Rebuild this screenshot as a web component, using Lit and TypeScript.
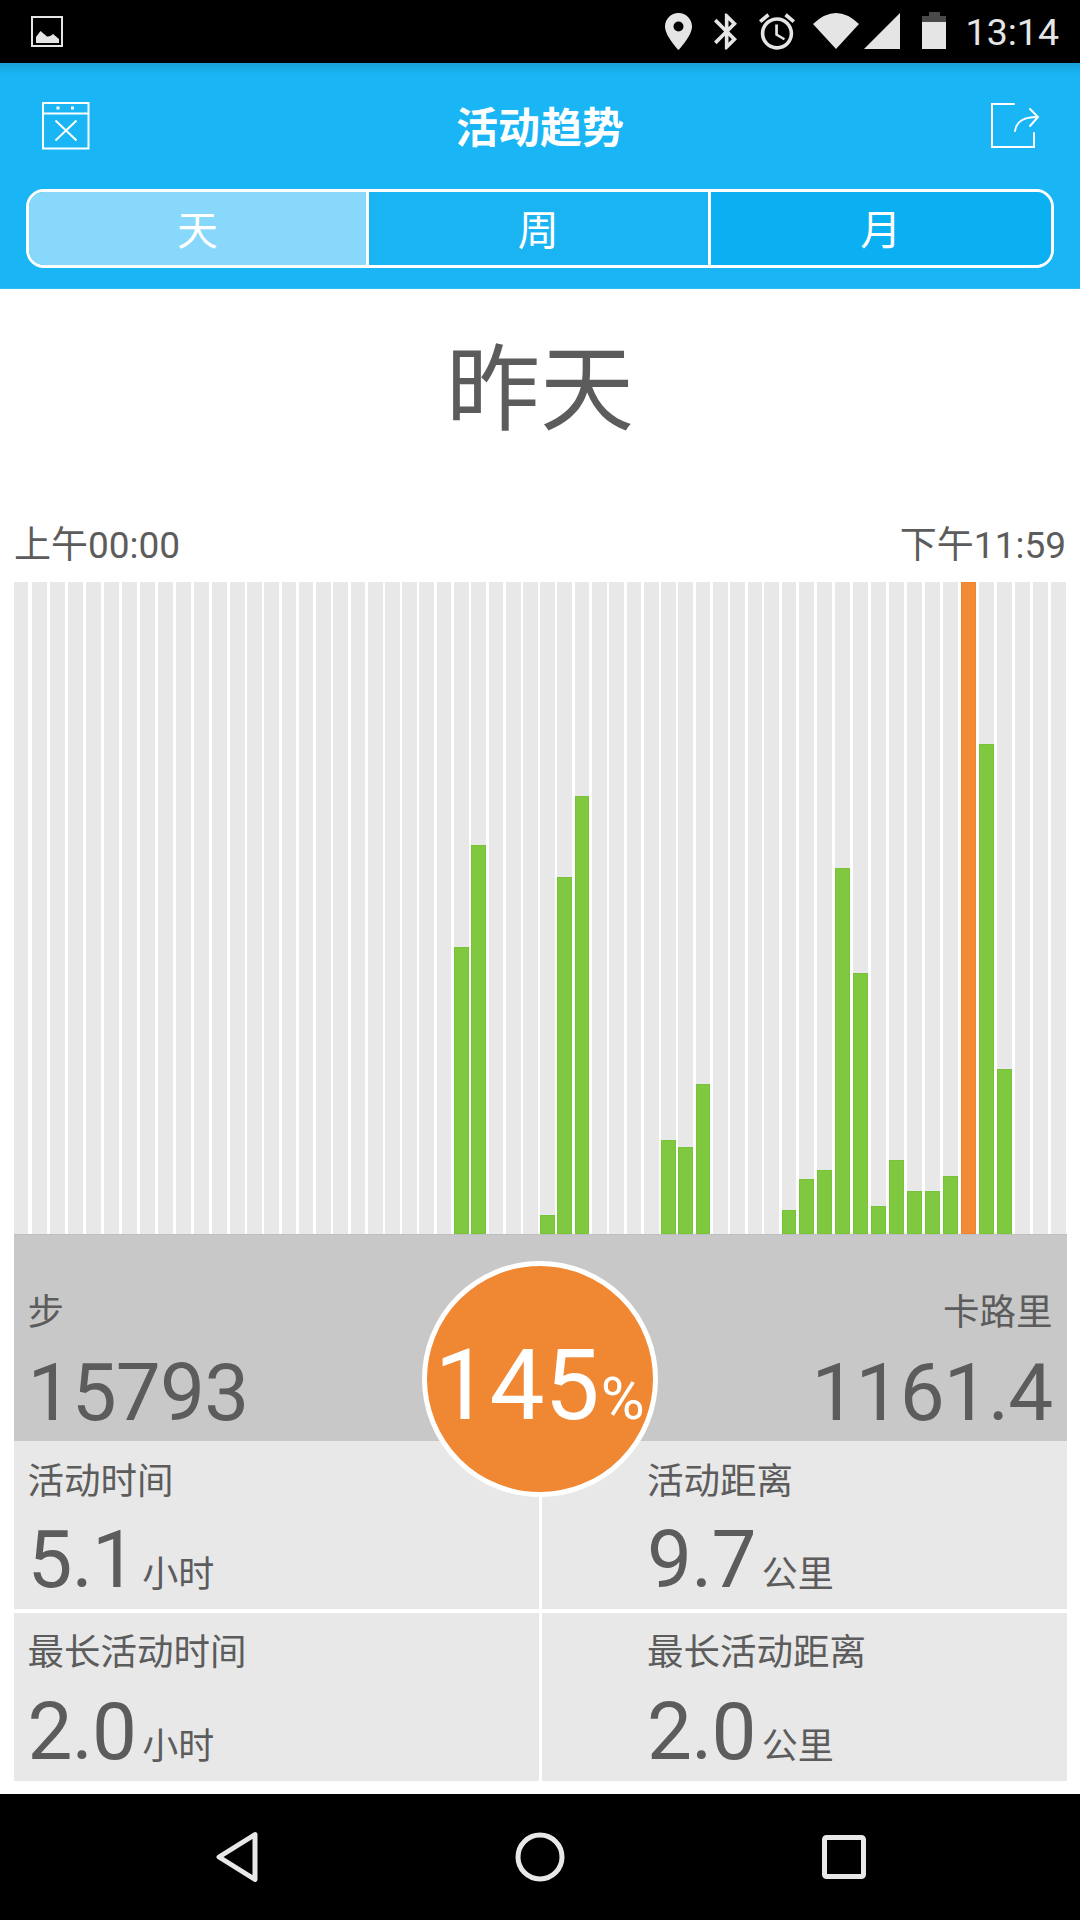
import { LitElement, css, html } from "lit";
import { customElement } from "lit/decorators.js";

// left edge of each of the 60 columns, read off the reference (it was scaled, so pitch is uneven)
const COL_X = [
  41, 96, 150, 204, 258, 312, 366, 420, 474, 528, 582, 636, 690, 741, 792, 845, 896, 948, 1000, 1052,
  1104, 1156, 1206, 1258, 1310, 1362, 1414, 1466, 1518, 1570, 1620, 1672, 1724, 1776, 1828, 1880, 1932,
  1983, 2035, 2087, 2139, 2191, 2243, 2293, 2345, 2397, 2451, 2505, 2559, 2613, 2667, 2721, 2775, 2829,
  2883, 2937, 2991, 3045, 3099, 3153,
].map((v) => v / 3);

const CHART_BOTTOM = 1234;
// column index -> top edge of its bar
const BAR_TOPS: Record<number, number> = {
  25: 947, 26: 845, 30: 1215, 31: 877, 32: 796, 37: 1140, 38: 1147, 39: 1084, 44: 1210, 45: 1179,
  46: 1170, 47: 868, 48: 973, 49: 1206, 50: 1160, 51: 1191, 52: 1191, 53: 1176, 54: 582, 55: 744, 56: 1069,
};
const PEAK = 54;

const CELLS = [
  { label: "活动时间", value: "5.1", unit: "小时" },
  { label: "活动距离", value: "9.7", unit: "公里" },
  { label: "最长活动时间", value: "2.0", unit: "小时" },
  { label: "最长活动距离", value: "2.0", unit: "公里" },
];

@customElement("app-root")
export class AppRoot extends LitElement {
  static styles = css`
    :host {
      display: block;
      position: relative;
      width: 1080px;
      height: 1920px;
      overflow: hidden;
      background: #fff;
      color: #5c5c5c;
      font-family: Roboto, "Noto Sans CJK SC", sans-serif;
    }
    svg {
      display: block;
      flex: none;
    }
    .status {
      height: 63px;
      background: #000;
      display: flex;
      align-items: flex-start;
      padding: 12px 21px 0 31px;
      box-sizing: border-box;
      color: #e5e5e5;
      fill: #e5e5e5;
    }
    .thumb {
      margin-top: 4px;
      margin-right: auto;
    }
    .pin,
    .bt,
    .alarm {
      margin-top: 1px;
      margin-right: 22px;
    }
    .alarm {
      margin-right: 18px;
    }
    .wifi {
      margin-top: 1px;
      margin-right: 5px;
    }
    .signal {
      margin-top: 1px;
      margin-right: 22px;
    }
    .time {
      margin-left: 20px;
      font-size: 37.5px;
      line-height: 40px;
    }
    .header {
      height: 226px;
      box-sizing: border-box;
      background: linear-gradient(#179fd8 0, #1ab5f4 11px);
      padding: 39px 26px 0;
      border-bottom: 1px solid #2cbdf6;
    }
    .bar {
      height: 48px;
      padding: 0 14px 0 16px;
      display: flex;
      align-items: center;
      justify-content: space-between;
      color: #fff;
      font-size: 42px;
      font-weight: 700;
    }
    .title {
      padding-bottom: 4px;
    }
    .tabs {
      margin-top: 39px;
      height: 79px;
      box-sizing: border-box;
      border: 3px solid #fff;
      border-radius: 18px;
      overflow: hidden;
      display: flex;
      color: #fff;
      font-size: 41px;
    }
    .tab {
      display: flex;
      align-items: center;
      justify-content: center;
      padding-bottom: 3px;
      box-sizing: border-box;
      background: #1ab4f2;
    }
    .tab + .tab {
      border-left: 3px solid #fff;
    }
    .tab.day {
      width: 337px;
      background: #87d8fa;
    }
    .tab.week {
      width: 341.5px;
    }
    .tab.month {
      flex: 1;
      background: #0bb0f2;
    }
    .date {
      height: 225px;
      padding-top: 44px;
      box-sizing: border-box;
      text-align: center;
      font-size: 94px;
      line-height: 116px;
    }
    .range {
      height: 68px;
      padding: 10px 14px 0;
      box-sizing: border-box;
      display: flex;
      justify-content: space-between;
      font-size: 37px;
      line-height: 44px;
    }
    .chart {
      margin: 0 13px 0 13.7px;
      height: 652px;
      display: flex;
    }
    .col {
      flex: none;
      display: flex;
      align-items: flex-end;
    }
    .track {
      width: 14.7px;
      height: 100%;
      background: #e8e8e8;
      display: flex;
      align-items: flex-end;
    }
    .fill {
      width: 100%;
      background: #7fc83f;
      box-shadow: inset 0 0 0 1px #76c437;
    }
    .fill.peak {
      background: #f28a36;
      box-shadow: inset 0 0 0 1px #ef8530;
    }
    .stats {
      position: relative;
      margin: 0 13.5px;
    }
    .band {
      height: 207px;
      box-sizing: border-box;
      background: #c8c8c8;
      border-top: 1px solid #bebebe;
      padding: 56px 14px 0 14px;
      display: flex;
      justify-content: space-between;
    }
    .band .right {
      text-align: right;
    }
    .band .value {
      margin-top: 18px;
    }
    .label {
      font-size: 36.5px;
      line-height: 44px;
    }
    .value {
      font-size: 80px;
      line-height: 80px;
      letter-spacing: -0.8px;
    }
    .grid {
      display: grid;
      grid-template-columns: 525.5px 524.5px;
      grid-auto-rows: 168px;
      column-gap: 3px;
      row-gap: 4px;
    }
    .cell {
      background: #e8e8e8;
      padding: 19px 0 0 14px;
      box-sizing: border-box;
    }
    .cell:nth-child(even) {
      padding-left: 105px;
    }
    .cell:nth-child(n + 3) {
      padding-top: 18px;
    }
    .reading {
      display: flex;
      align-items: baseline;
      margin-top: 16px;
    }
    .cell:nth-child(n + 3) .reading {
      margin-top: 17px;
    }
    .unit {
      margin-left: 6px;
      font-size: 36px;
    }
    .goal {
      position: absolute;
      left: 408px;
      top: 27px;
      width: 236px;
      height: 236px;
      box-sizing: border-box;
      border: 5px solid #fff;
      border-radius: 50%;
      background: #f08733;
      color: #fff;
      display: flex;
      align-items: baseline;
      justify-content: center;
      padding-top: 70px;
      font-size: 98px;
      line-height: 100px;
    }
    .goal span {
      font-size: 60px;
      line-height: 60px;
      margin-left: 1px;
    }
    .nav {
      position: absolute;
      top: 1794px;
      left: 0;
      width: 1080px;
      height: 126px;
      padding-left: 2px;
      box-sizing: border-box;
      background: #000;
      display: flex;
      align-items: center;
      justify-content: center;
      gap: 257px;
      fill: none;
      stroke: #e8e8e8;
      stroke-width: 5;
      stroke-linejoin: round;
    }
  `;

  private renderStatus() {
    return html`
      <div class="status">
        <svg class="thumb" width="32" height="31" viewBox="0 0 32 31">
          <rect x="1" y="1" width="30" height="29" fill="none" stroke="#e5e5e5" stroke-width="2" />
          <path d="M5 27V21L9.5 15 16 20.5Q19 21 22 18L28 23V27Z" />
        </svg>
        <svg class="pin" width="27" height="37" viewBox="0 0 27 37">
          <path
            fill-rule="evenodd"
            d="M13.5 0C6 0 0 6 0 13.5 0 23 13.5 37 13.5 37S27 23 27 13.5C27 6 21 0 13.5 0ZM13.5 8.5a5 5 0 1 1 0 10 5 5 0 0 1 0-10Z"
          />
        </svg>
        <svg class="bt" width="23" height="37" viewBox="5 2 12.71 20">
          <path
            d="M17.71 7.71L12 2h-1v7.59L6.41 5 5 6.41 10.59 12 5 17.59 6.41 19 11 14.41V22h1l5.71-5.71-4.3-4.29 4.3-4.29zM13 5.83l1.88 1.88L13 9.59V5.83zm1.88 10.46L13 18.17v-3.76l1.88 1.88z"
          />
        </svg>
        <svg class="alarm" width="36" height="37" viewBox="2 1.86 20 20.14">
          <path
            d="M22 5.72l-4.6-3.86-1.29 1.53 4.6 3.86L22 5.72zM7.88 3.39L6.6 1.86 2 5.71l1.29 1.53 4.59-3.85zM12.5 8H11v6l4.75 2.85.75-1.23-4-2.37V8zM12 4c-4.97 0-9 4.03-9 9s4.03 9 9 9 9-4.03 9-9-4.03-9-9-9zm0 16c-3.87 0-7-3.13-7-7s3.13-7 7-7 7 3.13 7 7-3.13 7-7 7z"
          />
        </svg>
        <svg class="wifi" width="46" height="36" viewBox="0 0 46 36">
          <path d="M0 11Q23-11 46 11L23 36Z" />
        </svg>
        <svg class="signal" width="36" height="36" viewBox="0 0 36 36">
          <path d="M0 36L36 0V36Z" />
        </svg>
        <svg class="battery" width="24" height="37" viewBox="0 0 24 37">
          <path fill="#4a4a4a" d="M7 0H18V4H24V10H0V4H7Z" />
          <path d="M0 10H24V37H0Z" />
        </svg>
        <div class="time">13:14</div>
      </div>
    `;
  }

  private renderHeader() {
    return html`
      <div class="header">
        <div class="bar">
          <svg width="48" height="48" viewBox="0 0 48 48" fill="none" stroke="#fff" stroke-width="2">
            <rect x="1" y="1" width="45.5" height="45.5" />
            <path d="M1 11.5H46.5" />
            <path d="M13.5 18.5L34.5 38.5M34.5 18.5L13.5 38.5" />
            <rect x="14.5" y="4.5" width="3" height="3" fill="#fff" stroke="none" />
            <rect x="29" y="4.5" width="3" height="3" fill="#fff" stroke="none" />
          </svg>
          <div class="title">活动趋势</div>
          <svg width="50" height="48" viewBox="0 0 50 48" fill="none" stroke="#fff" stroke-width="2" stroke-linecap="round">
            <path d="M24 2H2V45H44V31" />
            <path d="M25 29C26 20 34 15 47 15" />
            <path d="M40 7L48 15 40 24" />
          </svg>
        </div>
        <div class="tabs">
          <div class="tab day">天</div>
          <div class="tab week">周</div>
          <div class="tab month">月</div>
        </div>
      </div>
    `;
  }

  private renderChart() {
    return html`
      <div class="chart">
        ${COL_X.map((x, i) => {
          const next = COL_X[i + 1] ?? x + 15;
          const top = BAR_TOPS[i];
          return html`
            <div class="col" style="width:${next - x}px">
              <div class="track">
                ${top
                  ? html`<div class="fill ${i === PEAK ? "peak" : ""}" style="height:${CHART_BOTTOM - top}px"></div>`
                  : ""}
              </div>
            </div>
          `;
        })}
      </div>
    `;
  }

  render() {
    return html`
      ${this.renderStatus()} ${this.renderHeader()}
      <div class="date">昨天</div>
      <div class="range"><span>上午00:00</span><span>下午11:59</span></div>
      ${this.renderChart()}
      <div class="stats">
        <div class="band">
          <div>
            <div class="label">步</div>
            <div class="value">15793</div>
          </div>
          <div class="right">
            <div class="label">卡路里</div>
            <div class="value">1161.4</div>
          </div>
        </div>
        <div class="grid">
          ${CELLS.map(
            (c) => html`
              <div class="cell">
                <div class="label">${c.label}</div>
                <div class="reading">
                  <div class="value">${c.value}</div>
                  <div class="unit">${c.unit}</div>
                </div>
              </div>
            `
          )}
        </div>
        <div class="goal">145<span>%</span></div>
      </div>
      <div class="nav">
        <svg width="42" height="50" viewBox="0 0 42 50">
          <path d="M39 2.5L3 25 39 47.5Z" />
        </svg>
        <svg width="50" height="50" viewBox="0 0 50 50">
          <circle cx="25" cy="25" r="22" />
        </svg>
        <svg width="44" height="44" viewBox="0 0 44 44">
          <rect x="2.5" y="2.5" width="39" height="39" rx="2" />
        </svg>
      </div>
    `;
  }
}
